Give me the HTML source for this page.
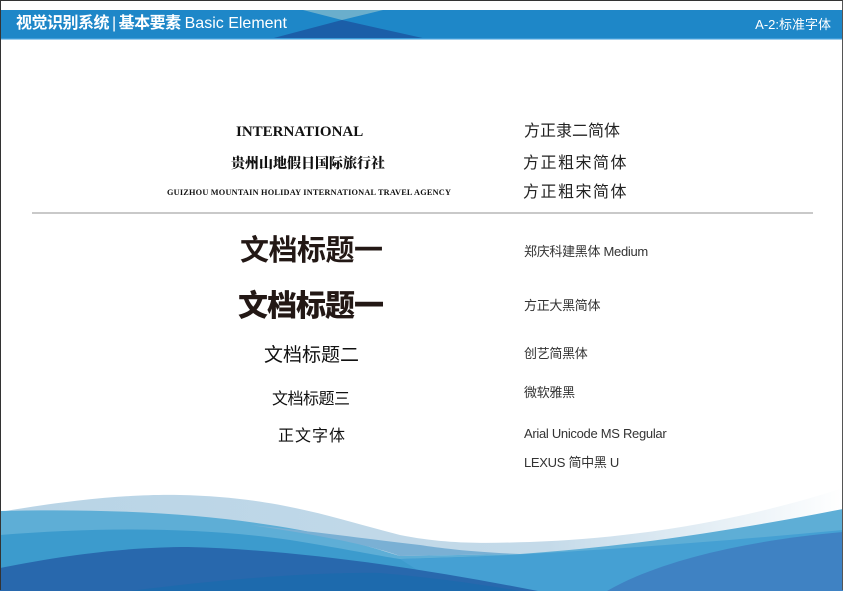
<!DOCTYPE html>
<html><head><meta charset="utf-8"><style>
*{margin:0;padding:0}
body{width:843px;height:591px;position:relative;overflow:hidden;background:#fff;font-family:"Liberation Sans","Noto Sans CJK SC",sans-serif}
.frame{position:absolute;left:0;top:0;width:841px;height:589px;border:1px solid #333;border-bottom:none;border-right:1px solid #555}
.t{position:absolute;white-space:nowrap;line-height:1}
.serif{font-family:"Liberation Serif","Noto Serif CJK SC",serif;font-weight:bold;color:#111}
.r{left:524px;color:#333;font-size:13px;letter-spacing:-0.3px}
.h{color:#231815;font-weight:bold}
</style></head><body>
<svg style="position:absolute;left:0;top:0" width="843" height="591">
<rect x="0" y="10" width="843" height="29" fill="#1e87c8"/>
<polygon points="303,10 383,10 342,20" fill="#6aaecc"/>
<polygon points="342,20 270,39 427,39" fill="#1b5ea8"/>
<rect x="0" y="38" width="843" height="1.5" fill="#3c9bd8"/>
<defs><linearGradient id="g1" x1="0" x2="1"><stop offset="0" stop-color="#b8d4e6"/><stop offset="0.65" stop-color="#c4dae9"/><stop offset="1" stop-color="#fff"/></linearGradient></defs>
<path d="M0,512 C80,498 140,494 180,495 C280,497 340,520 400,535 C450,545 490,543 530,542 C650,538 760,515 843,488 L843,591 L0,591Z" fill="url(#g1)"/>
<path d="M0,511 C120,508 220,515 300,530 C350,540 380,550 400,556 L520,554 C650,545 760,525 843,509 L843,591 L0,591Z" fill="#5eaed6"/>
<path d="M250,525 C320,535 370,545 400,556 L520,554 C470,552 440,548 420,545 C360,538 300,530 250,525Z" fill="#7ab0d4"/>
<path d="M0,535 C100,527 200,527 290,540 C340,548 380,556 400,559 L843,545 L843,591 L0,591Z" fill="#3c9bcd"/>
<path d="M400,559 C500,557 650,548 843,530 L843,591 L450,591Z" fill="#45a0d3"/>
<path d="M607,591 C660,560 750,540 843,532 L843,591Z" fill="#3f82c3"/>
<path d="M0,568 C80,552 140,547 188,547 C300,550 420,568 538,591 L0,591Z" fill="#2868ad"/>
<path d="M130,591 C230,578 320,572 380,573 C440,578 490,586 520,591Z" fill="#1d6aad"/>
</svg>
<div class="frame"></div>
<div class="t" style="left:16px;top:16px;font-size:16px;color:#fff;font-weight:bold;letter-spacing:-0.5px">视觉识别系统<span style="font-weight:normal;margin:0 3px">|</span>基本要素 <span style="font-weight:normal;letter-spacing:0">Basic Element</span></div>
<div class="t" style="right:12px;top:18px;font-size:13px;color:#fff">A-2:标准字体</div>

<div class="t serif" style="left:236px;top:125px;font-size:15px">INTERNATIONAL</div>
<div class="t serif" style="left:231px;top:158px;font-size:14px;font-weight:900">贵州山地假日国际旅行社</div>
<div class="t serif" style="left:167px;top:189px;font-size:8.3px;letter-spacing:0.2px">GUIZHOU MOUNTAIN HOLIDAY INTERNATIONAL TRAVEL AGENCY</div>
<div class="t" style="left:524px;top:124px;font-size:16px;color:#222">方正隶二简体</div>
<div class="t" style="left:523px;top:156px;font-size:16px;color:#222;letter-spacing:1.5px">方正粗宋简体</div>
<div class="t" style="left:523px;top:185px;font-size:16px;color:#222;letter-spacing:1.5px">方正粗宋简体</div>
<div style="position:absolute;left:32px;top:212px;width:781px;height:2px;background:#c9c9c9"></div>

<div class="t h" style="left:240px;top:237px;font-size:29px;letter-spacing:-0.5px">文档标题一</div>
<div class="t h" style="left:238px;top:292px;font-size:30px;font-weight:900;letter-spacing:-1px">文档标题一</div>
<div class="t h" style="left:264px;top:346px;font-size:19px;font-weight:normal;color:#111">文档标题二</div>
<div class="t h" style="left:272px;top:392px;font-size:16px;font-weight:normal;color:#111;letter-spacing:-0.5px">文档标题三</div>
<div class="t h" style="left:278px;top:429px;font-size:16px;font-weight:normal;color:#111;letter-spacing:1px">正文字体</div>

<div class="t r" style="top:245px">郑庆科建黑体 Medium</div>
<div class="t r" style="top:299px">方正大黑简体</div>
<div class="t r" style="top:347px">创艺简黑体</div>
<div class="t r" style="top:386px">微软雅黑</div>
<div class="t r" style="top:427px">Arial Unicode MS Regular</div>
<div class="t r" style="top:456px">LEXUS 简中黑 U</div>
</body></html>
